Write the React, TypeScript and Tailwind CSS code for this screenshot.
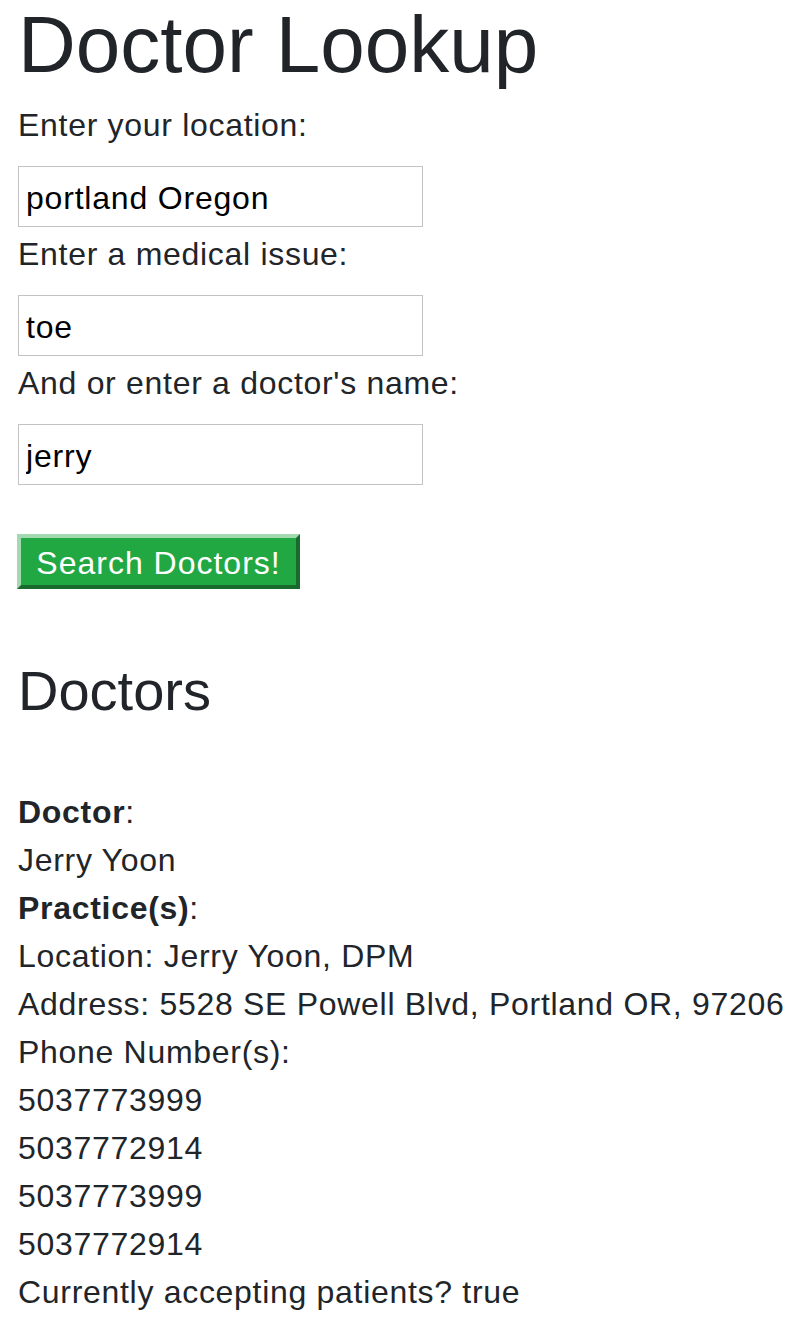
import React from "react";

const phones = ["5037773999", "5037772914", "5037773999", "5037772914"];

const Field = ({ label, value }: { label: string; value: string }) => (
  <>
    <label className="block leading-[48px] pt-[3px] mb-[17px]">{label}</label>
    <input
      type="text"
      defaultValue={value}
      className="block w-[405px] h-[61px] border border-[#c3c3c3] px-[7px] pt-[4px] text-[32px] tracking-[0.8px] text-black outline-none"
    />
  </>
);

export default function App() {
  return (
    <div className="px-[18px] text-[32px] leading-[48px] tracking-[0.7px] text-[#212529] font-['Liberation_Sans',Arial,sans-serif] bg-white min-h-[1338px]">
      <h1 className="text-[80px] leading-[96px] font-normal tracking-normal pt-0 mb-[5px] -mt-[3px]">Doctor Lookup</h1>
      <form onSubmit={(e) => e.preventDefault()}>
        <Field label="Enter your location:" value="portland Oregon" />
        <Field label="Enter a medical issue:" value="toe" />
        <Field label="And or enter a doctor's name:" value="jerry" />
        <button
          type="submit"
          className="mt-[49px] -ml-[1px] block w-[283px] h-[55px] bg-[#22a843] text-white text-[32px] tracking-[1px] leading-none pt-[2px] border-[4px] border-t-[#a3d9b0] border-l-[#a3d9b0] border-b-[#186b2d] border-r-[#186b2d]"
        >
          Search Doctors!
        </button>
      </form>
      <h3 className="mt-[68px] text-[56px] leading-[67px] font-normal tracking-normal mb-[64px]">Doctors</h3>
      <div>
        <div>
          <b>Doctor</b>:
        </div>
        <div>Jerry Yoon</div>
        <div>
          <b>Practice(s)</b>:
        </div>
        <div>Location: Jerry Yoon, DPM</div>
        <div>Address: 5528 SE Powell Blvd, Portland OR, 97206</div>
        <div>Phone Number(s):</div>
        {phones.map((p, i) => (
          <div key={i}>{p}</div>
        ))}
        <div>Currently accepting patients? true</div>
      </div>
    </div>
  );
}
